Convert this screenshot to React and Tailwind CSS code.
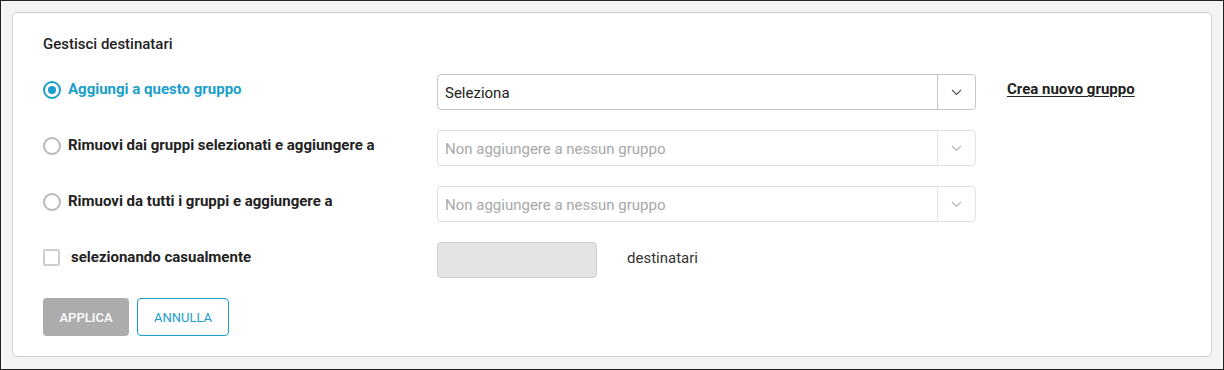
import React, { useState } from "react";

const font = { fontFamily: "Roboto, 'Liberation Sans', sans-serif" };

function Chevron({ muted }) {
  return (
    <svg width="11" height="7" viewBox="0 0 11 7" fill="none">
      <path
        d="M1 1l4.5 4.5L10 1"
        stroke={muted ? "#b5b5b5" : "#555"}
        strokeWidth="1.2"
      />
    </svg>
  );
}

function SelectBox({ value, muted }) {
  return (
    <div
      className={`flex h-[36px] w-[539px] items-stretch rounded-[4px] border ${
        muted ? "border-[#e2e2e2]" : "border-[#c4c4c4]"
      }`}
    >
      <div
        className={`flex flex-1 items-center pl-[7px] pt-[2px] text-[15px] ${
          muted ? "text-[#a8a8a8]" : "text-[#222]"
        }`}
      >
        {value}
      </div>
      <div
        className={`flex w-[38px] items-center justify-center border-l ${
          muted ? "border-[#e2e2e2]" : "border-[#c4c4c4]"
        }`}
      >
        <Chevron muted={muted} />
      </div>
    </div>
  );
}

function Radio({ checked }) {
  return checked ? (
    <span className="flex h-[18px] w-[18px] items-center justify-center rounded-full border-2 border-[#1a9ecb]">
      <span className="h-[8px] w-[8px] rounded-full bg-[#1a9ecb]" />
    </span>
  ) : (
    <span className="h-[18px] w-[18px] rounded-full border-2 border-[#b9b9b9]" />
  );
}

const options = [
  { label: "Aggiungi a questo gruppo", value: "Seleziona" },
  { label: "Rimuovi dai gruppi selezionati e aggiungere a", value: "Non aggiungere a nessun gruppo" },
  { label: "Rimuovi da tutti i gruppi e aggiungere a", value: "Non aggiungere a nessun gruppo" },
];

export default function App() {
  const [selected, setSelected] = useState(0);

  return (
    <div
      className="h-[370px] w-[1224px] border border-[#222] bg-[#f3f3f3] px-[11px] pt-[11px]"
      style={font}
    >
      <div className="h-[345px] w-[1200px] rounded-[5px] border border-[#cfcfcf] bg-white pl-[30px] pt-[21px]">
        <h2 className="text-[15px] font-medium leading-[20px] text-[#222]">
          Gestisci destinatari
        </h2>

        <div className="mt-[20px] flex flex-col gap-[20px]">
          {options.map((opt, i) => (
            <div key={i} className="flex items-center">
              <button
                onClick={() => setSelected(i)}
                className="mb-[5px] flex w-[394px] items-center gap-[7px]"
              >
                <Radio checked={selected === i} />
                <span
                  className={`text-[15px] font-bold ${
                    selected === i ? "text-[#1a9ecb]" : "text-[#222]"
                  }`}
                >
                  {opt.label}
                </span>
              </button>
              {/* select column */}
              <SelectBox value={opt.value} muted={i !== 0} />
              {i === 0 && (
                <a className="mb-[5px] ml-[31px] text-[15px] font-bold text-[#222] underline underline-offset-2">
                  Crea nuovo gruppo
                </a>
              )}
            </div>
          ))}

          <div className="flex items-center">
            <div className="mb-[5px] flex w-[394px] items-center gap-[11px]">
              <span className="h-[17px] w-[17px] rounded-[2px] border-2 border-[#cfcfcf]" />
              <span className="text-[15px] font-bold text-[#222]">
                selezionando casualmente
              </span>
            </div>
            <div className="h-[36px] w-[160px] rounded-[4px] border border-[#cfcfcf] bg-[#e4e4e4]" />
            <span className="mb-[3px] ml-[30px] text-[15px] text-[#333]">destinatari</span>
          </div>
        </div>

        <div className="mt-[20px] flex gap-[8px]">
          <button className="h-[38px] w-[86px] rounded-[4px] bg-[#acacac] pt-[2px] text-[13px] font-medium text-white">
            APPLICA
          </button>
          <button className="h-[38px] w-[92px] rounded-[4px] border border-[#1a9ecb] bg-white pt-[2px] text-[13px] text-[#1a9ecb]">
            ANNULLA
          </button>
        </div>
      </div>
    </div>
  );
}
